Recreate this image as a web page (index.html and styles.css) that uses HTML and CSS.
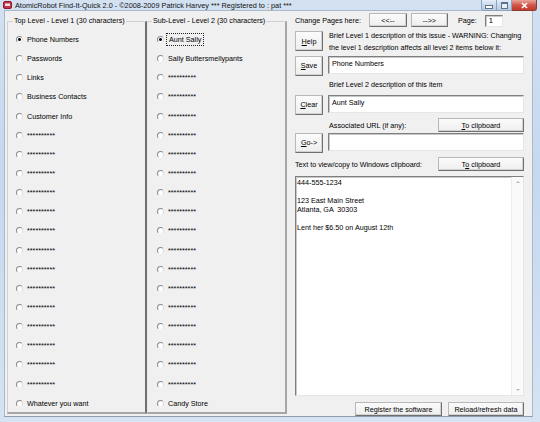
FILE: index.html
```html
<!DOCTYPE html>
<html lang="en">
<head>
    <meta charset="UTF-8">
    <title>AtomicRobot Find-It-Quick 2.0</title>
    <link rel="stylesheet" href="styles.css">
</head>
<body>

<div class="window">
    <div class="titlebar">
        <svg class="app-icon" width="9" height="8" viewBox="0 0 9 8">
            <rect x="0.5" y="0.5" width="8" height="7" rx="1.5" fill="#c2364a" stroke="#8a1c2c"/>
            <rect x="2" y="2.5" width="5" height="2.5" fill="#f7dfe3"/>
        </svg>
        <span class="title">AtomicRobot Find-It-Quick 2.0 - ©2008-2009 Patrick Harvey *** Registered to : pat ***</span>
        <div class="caption-btns">
            <span class="cap cap-min"><i></i></span>
            <span class="cap cap-max"><i></i></span>
            <span class="cap cap-close">
                <svg width="9" height="7" viewBox="0 0 9 7"><path d="M2 1 L7 6 M7 1 L2 6" stroke="#fff" stroke-width="1.6"/></svg>
            </span>
        </div>
    </div>

    <div class="client">
        <fieldset class="group group-top">
            <legend>Top Level - Level 1 (30 characters)</legend>
            <div class="opt"><span class="radio checked"></span>Phone Numbers</div>
            <div class="opt"><span class="radio"></span>Passwords</div>
            <div class="opt"><span class="radio"></span>Links</div>
            <div class="opt"><span class="radio"></span>Business Contacts</div>
            <div class="opt"><span class="radio"></span>Customer Info</div>
            <div class="opt"><span class="radio"></span>**********</div>
            <div class="opt"><span class="radio"></span>**********</div>
            <div class="opt"><span class="radio"></span>**********</div>
            <div class="opt"><span class="radio"></span>**********</div>
            <div class="opt"><span class="radio"></span>**********</div>
            <div class="opt"><span class="radio"></span>**********</div>
            <div class="opt"><span class="radio"></span>**********</div>
            <div class="opt"><span class="radio"></span>**********</div>
            <div class="opt"><span class="radio"></span>**********</div>
            <div class="opt"><span class="radio"></span>**********</div>
            <div class="opt"><span class="radio"></span>**********</div>
            <div class="opt"><span class="radio"></span>**********</div>
            <div class="opt"><span class="radio"></span>**********</div>
            <div class="opt"><span class="radio"></span>**********</div>
            <div class="opt"><span class="radio"></span>Whatever you want</div>
        </fieldset>

        <fieldset class="group group-sub">
            <legend>Sub-Level - Level 2 (30 characters)</legend>
            <div class="opt"><span class="radio checked"></span><span class="focused">Aunt Sally</span></div>
            <div class="opt"><span class="radio"></span>Sally Buttersmellypants</div>
            <div class="opt"><span class="radio"></span>**********</div>
            <div class="opt"><span class="radio"></span>**********</div>
            <div class="opt"><span class="radio"></span>**********</div>
            <div class="opt"><span class="radio"></span>**********</div>
            <div class="opt"><span class="radio"></span>**********</div>
            <div class="opt"><span class="radio"></span>**********</div>
            <div class="opt"><span class="radio"></span>**********</div>
            <div class="opt"><span class="radio"></span>**********</div>
            <div class="opt"><span class="radio"></span>**********</div>
            <div class="opt"><span class="radio"></span>**********</div>
            <div class="opt"><span class="radio"></span>**********</div>
            <div class="opt"><span class="radio"></span>**********</div>
            <div class="opt"><span class="radio"></span>**********</div>
            <div class="opt"><span class="radio"></span>**********</div>
            <div class="opt"><span class="radio"></span>**********</div>
            <div class="opt"><span class="radio"></span>**********</div>
            <div class="opt"><span class="radio"></span>**********</div>
            <div class="opt"><span class="radio"></span>Candy Store</div>
        </fieldset>

        <div class="panel">
            <div class="row pager">
                <span class="lbl">Change Pages here:</span>
                <button class="btn btn-prev">&lt;&lt;--</button>
                <button class="btn btn-next">--&gt;&gt;</button>
                <span class="lbl page-lbl">Page:</span>
                <span class="field page-field">1</span>
            </div>

            <div class="row help-row">
                <button class="btn side-btn"><u>H</u>elp</button>
                <p class="note">Brief Level 1 description of this issue - WARNING: Changing<br>the level 1 description affects all level 2 items below it:</p>
            </div>

            <div class="row field-row save-row">
                <button class="btn side-btn"><u>S</u>ave</button>
                <div class="field wide">Phone Numbers</div>
            </div>

            <div class="row caption-row">
                <span class="lbl indent">Brief Level 2 description of this item</span>
            </div>

            <div class="row field-row clear-row">
                <button class="btn side-btn"><u>C</u>lear</button>
                <div class="field wide">Aunt Sally</div>
            </div>

            <div class="row url-row">
                <span class="lbl indent">Associated URL (if any):</span>
                <button class="btn clip-btn"><u>T</u>o clipboard</button>
            </div>

            <div class="row field-row go-row">
                <button class="btn side-btn"><u>G</u>o-&gt;</button>
                <div class="field wide"></div>
            </div>

            <div class="row text-row">
                <span class="lbl">Text to view/copy to Windows clipboard:</span>
                <button class="btn clip-btn">T<u>o</u> clipboard</button>
            </div>

            <div class="memo">
                <div class="memo-text">444-555-1234

123 East Main Street
Atlanta, GA  30303

Lent her $6.50 on August 12th</div>
                <div class="vscroll">
                    <span class="arrow up"></span>
                    <span class="arrow down"></span>
                </div>
            </div>

            <div class="row bottom-row">
                <button class="btn reg-btn">Register the software</button>
                <button class="btn reload-btn">Reload/refresh data</button>
            </div>
        </div>
    </div>
</div>

</body>
</html>
```

FILE: styles.css
```css
body {
    margin: 0;
    padding: 0;
    font-family: "Liberation Sans", Arial, sans-serif;
    font-size: 7.2px;
    color: #000;
    background-color: #fff;
}
.window {
    width: 540px;
    height: 422px;
    box-sizing: border-box;
    padding: 0 7px 5px 4px;
    display: flex;
    flex-direction: column;
    background: linear-gradient(to bottom, #d3e1f1, #c6d8ee 40%, #d5e3f2);
}
.titlebar {
    height: 13px;
    display: flex;
    align-items: center;
    position: relative;
}
.app-icon {
    margin: 0 3px 0 -1px;
}
.title {
    font-size: 7.3px;
    color: #111;
    white-space: nowrap;
}
.caption-btns {
    position: absolute;
    top: 0;
    right: -4px;
    display: flex;
}
.cap {
    height: 11px;
    box-sizing: border-box;
    border: 1px solid #8da3bd;
    border-top: none;
    display: flex;
    align-items: center;
    justify-content: center;
    background: linear-gradient(to bottom, #e6eef8, #cad9ea 50%, #bccde2);
}
.cap-min {
    width: 16px;
    border-radius: 0 0 0 3px;
}
.cap-max {
    width: 15px;
    border-left: none;
}
.cap-close {
    width: 25px;
    border-left: none;
    border-color: #8a3a33;
    border-radius: 0 0 3px 0;
    background: linear-gradient(to bottom, #e8a49b, #d2574b 50%, #c23a2c);
}
.cap-min i {
    width: 6px;
    height: 2px;
    margin-top: 4px;
    background: #fff;
    border: 1px solid #5d7390;
}
.cap-max i {
    width: 5px;
    height: 4px;
    border: 1px solid #5d7390;
    border-top-width: 2px;
    background: #e8eff7;
}
.client {
    flex: 1;
    display: flex;
    align-items: flex-start;
    background-color: #f0f0f0;
    border: 1px solid #a9b9cc;
    border-bottom-color: #8c9db2;
    padding: 1px 0 0 2px;
}
.group {
    margin: 4px 0 0 0;
    padding: 4px 0 0 8px;
    height: 398px;
    box-sizing: border-box;
    border: 1px solid #d0d0d0;
    border-right: 2px solid #a6a6a6;
    border-bottom: 2px solid #a6a6a6;
    min-width: 0;
}
.group legend {
    padding: 0 1px;
    margin-left: -3px;
    line-height: 10px;
}
.group-top {
    width: 140px;
    border-right-color: #707070;
}
.group-sub {
    width: 140px;
    padding-left: 9px;
    border-left-color: #e8e8e8;
}
.group-sub legend {
    margin-left: -5px;
}
.opt {
    height: 19.15px;
    display: flex;
    align-items: center;
    white-space: nowrap;
}
.radio {
    width: 5px;
    height: 5px;
    border: 1px solid;
    border-color: #8a8a8a #dcdcdc #f4f4f4 #8a8a8a;
    border-radius: 50%;
    background-color: #fff;
    margin-right: 4px;
    flex-shrink: 0;
}
.radio.checked {
    background: radial-gradient(circle, #111 1.2px, #fff 1.7px);
}
.focused {
    outline: 1px dotted #222;
    outline-offset: 1px;
    padding: 0 1px;
}
.panel {
    width: 229px;
    margin-left: 8px;
    display: flex;
    flex-direction: column;
}
.row {
    display: flex;
    align-items: center;
}
.btn {
    font-family: inherit;
    font-size: 7.2px;
    color: #000;
    padding: 0;
    box-sizing: border-box;
    border: 1px solid #b8b8b8;
    border-right-color: #6f6f6f;
    border-bottom-color: #6f6f6f;
    border-radius: 1px;
    background: linear-gradient(to bottom, #fbfbfb, #eeeeee);
    box-shadow: inset -1px -1px 0 #d2d2d2;
    cursor: pointer;
}
.field {
    box-sizing: border-box;
    background-color: #fff;
    border: 1px solid;
    border-color: #7f7f7f #e6e6e6 #e6e6e6 #7f7f7f;
    box-shadow: inset 1px 1px 0 #c8c8c8;
}
.pager {
    height: 14px;
    margin-top: 1px;
}
.btn-prev {
    width: 38px;
    height: 14px;
    margin-left: 8px;
}
.btn-next {
    width: 37px;
    height: 14px;
    margin-left: 4px;
}
.page-lbl {
    margin-left: 10px;
}
.page-field {
    width: 18px;
    height: 12px;
    margin-left: 8px;
    margin-top: 2px;
    padding-left: 3px;
    line-height: 10px;
    font-size: 7.6px;
}
.help-row {
    height: 20px;
    margin-top: 4px;
    align-items: flex-start;
}
.side-btn {
    width: 28px;
    height: 20px;
    flex-shrink: 0;
}
.note {
    margin: -1px 0 0 6px;
    line-height: 11.5px;
    white-space: nowrap;
}
.field-row .field {
    margin-left: 5px;
}
.wide {
    width: 196px;
    height: 18px;
    padding: 2px 0 0 3px;
    line-height: 9px;
    align-self: flex-start;
}
.save-row {
    height: 19px;
    margin-top: 5px;
}
.caption-row {
    height: 10px;
    margin-top: 4px;
}
.indent {
    margin-left: 34px;
}
.clear-row {
    height: 19px;
    margin-top: 6px;
}
.url-row {
    height: 14px;
    margin-top: 4px;
    justify-content: space-between;
}
.clip-btn {
    width: 86px;
    height: 14px;
}
.go-row {
    height: 19px;
    margin-top: 1px;
}
.text-row {
    height: 14px;
    margin-top: 5px;
    justify-content: space-between;
}
.memo {
    height: 220px;
    margin-top: 5px;
    box-sizing: border-box;
    display: flex;
    background-color: #fff;
    border: 1px solid;
    border-color: #7f7f7f #e6e6e6 #e6e6e6 #7f7f7f;
    box-shadow: inset 1px 1px 0 #c8c8c8;
}
.memo-text {
    flex: 1;
    white-space: pre;
    line-height: 9px;
    padding: 1px 0 0 1px;
}
.vscroll {
    width: 11px;
    border-left: 1px solid #ececec;
    background-color: #fafafa;
    display: flex;
    flex-direction: column;
    justify-content: space-between;
    align-items: center;
    padding: 4px 0 4px;
}
.arrow {
    width: 0;
    height: 0;
    border-left: 2px solid transparent;
    border-right: 2px solid transparent;
}
.arrow.up {
    border-bottom: 2px solid #b5b5b5;
}
.arrow.down {
    border-top: 2px solid #b5b5b5;
}
.bottom-row {
    height: 14px;
    margin-top: 6px;
    justify-content: flex-end;
}
.reg-btn {
    width: 87px;
    height: 14px;
}
.reload-btn {
    width: 76px;
    height: 14px;
    margin-left: 6px;
}
```
